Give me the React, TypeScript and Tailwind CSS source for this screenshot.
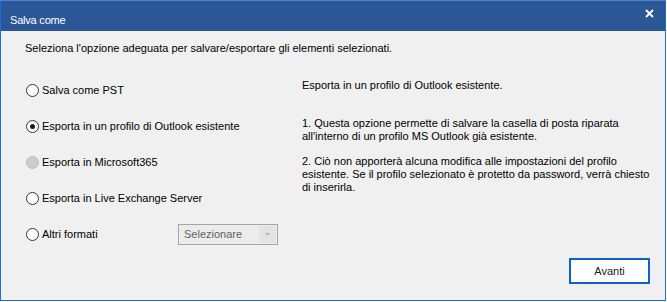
import { useState } from 'react';

const OPTIONS = [
  { id: 'pst', label: 'Salva come PST' },
  { id: 'outlook', label: 'Esporta in un profilo di Outlook esistente' },
  { id: 'm365', label: 'Esporta in Microsoft365', disabled: true },
  { id: 'live', label: 'Esporta in Live Exchange Server' },
  { id: 'other', label: 'Altri formati' },
];

const Radio = ({ checked, disabled }: { checked: boolean; disabled?: boolean }) => {
  if (disabled) {
    return <span className="h-[13px] w-[13px] shrink-0 rounded-full border border-[#bcbcbc] bg-[#cccccc]" />;
  }
  return (
    <span className="flex h-[13px] w-[13px] shrink-0 items-center justify-center rounded-full border border-[#333333] bg-white">
      {checked && <span className="h-[5px] w-[5px] rounded-full bg-[#1a1a1a]" />}
    </span>
  );
};

const App = () => {
  const [selected, setSelected] = useState('outlook');

  return (
    <div className="h-[302px] w-[667px] bg-white font-['Liberation_Sans',Arial,sans-serif] text-[11px] text-black">
      <div className="flex h-[301px] w-[666px] flex-col border border-t-[#4a86d6] border-x-[#1a6fd6] border-b-[#1a6fd6] bg-[#f0f0f0]">
        <div className="flex h-[30px] shrink-0 items-center justify-between bg-[#2b5797] pl-[9px] pr-[11px] text-white">
          <span className="mt-[8px] text-[11px] tracking-[-0.2px]">Salva come</span>
          <svg width="9" height="9" viewBox="0 0 9 9" className="-mt-[6px]">
            <path d="M1 1 L8 8 M8 1 L1 8" stroke="white" strokeWidth="1.8" />
          </svg>
        </div>

        <div className="flex flex-1 flex-col pl-[24px]">
          <p className="mt-[10px] leading-[14px]">
            Seleziona l'opzione adeguata per salvare/esportare gli elementi selezionati.
          </p>

          <div className="mt-[17px] flex">
            <div className="flex w-[277px] flex-col">
              {OPTIONS.map((o) => (
                <div key={o.id} className="flex h-[36px] items-center">
                  <label
                    className="flex w-[153px] cursor-default items-center gap-[3px] pl-[1px]"
                    onClick={() => !o.disabled && setSelected(o.id)}
                  >
                    <Radio checked={selected === o.id} disabled={o.disabled} />
                    <span className="whitespace-nowrap">{o.label}</span>
                  </label>
                  {o.id === 'other' && (
                    <div className="flex h-[21px] w-[100px] border border-[#a6a6a6] bg-[#ececec] p-[1px]">
                      <span className="flex flex-1 items-center pl-[4px] text-[#5f5f5f]">Selezionare</span>
                      <span className="flex w-[17px] items-center justify-center bg-[#e3e3e3]">
                        <svg width="5" height="3" viewBox="0 0 5 3">
                          <path d="M0 0 H5 L2.5 3 Z" fill="#b5b5b5" />
                        </svg>
                      </span>
                    </div>
                  )}
                </div>
              ))}
            </div>

            <div className="flex flex-col pt-[7px] leading-[13px]">
              <p>Esporta in un profilo di Outlook esistente.</p>
              <p className="mt-[25px]">
                1. Questa opzione permette di salvare la casella di posta riparata
                <br />
                all'interno di un profilo MS Outlook già esistente.
              </p>
              <p className="mt-[12px]">
                2. Ciò non apporterà alcuna modifica alle impostazioni del profilo
                <br />
                esistente. Se il profilo selezionato è protetto da password, verrà chiesto
                <br />
                di inserirla.
              </p>
            </div>
          </div>
        </div>

        <div className="flex justify-end pb-[16px] pr-[15px]">
          <button className="h-[26px] w-[81px] border-2 border-[#0a64c8] bg-white text-[11px] text-[#1a1a1a]">
            Avanti
          </button>
        </div>
      </div>
    </div>
  );
};

export default App;
